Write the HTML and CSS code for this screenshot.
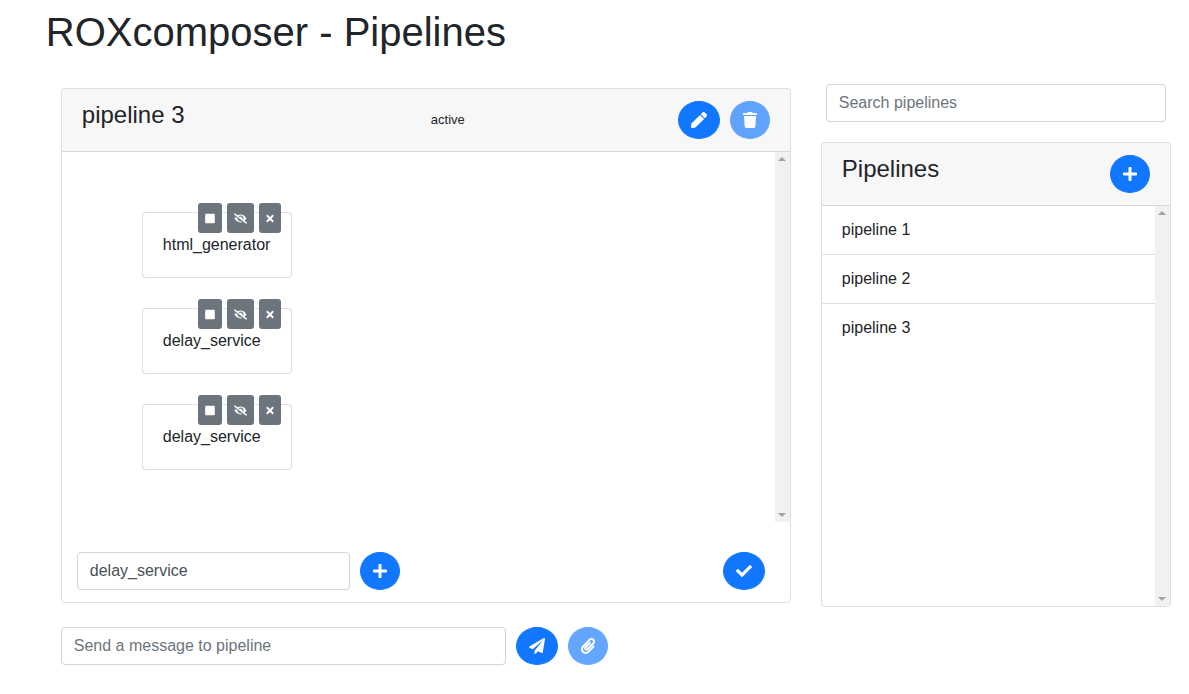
FILE: index.html
```html
<!DOCTYPE html>
<html lang="en">
<head>
<meta charset="utf-8">
<title>ROXcomposer - Pipelines</title>
<link rel="stylesheet" href="styles.css">
</head>
<body>
<svg class="defs" width="0" height="0" aria-hidden="true">
  <symbol id="i-pencil" viewBox="0 0 512 512"><path d="M290.74 93.24l128.02 128.02-277.99 277.99-114.14 12.6C11.35 513.54-1.56 500.62.14 485.34l12.7-114.22 277.9-278.88zm207.2-19.06l-60.11-60.11c-18.75-18.75-49.16-18.75-67.91 0l-56.55 56.55 128.02 128.02 56.55-56.55c18.75-18.76 18.75-49.16 0-67.91z"/></symbol>
  <symbol id="i-trash" viewBox="0 0 448 512"><path d="M432 32H312l-9.4-18.7A24 24 0 0 0 281.1 0H166.8a23.72 23.72 0 0 0-21.4 13.3L136 32H16A16 16 0 0 0 0 48v32a16 16 0 0 0 16 16h416a16 16 0 0 0 16-16V48a16 16 0 0 0-16-16zM53.2 467a48 48 0 0 0 47.9 45h245.8a48 48 0 0 0 47.9-45L416 128H32z"/></symbol>
  <symbol id="i-plus" viewBox="0 0 448 512"><path d="M416 208H272V64c0-17.67-14.33-32-32-32h-32c-17.67 0-32 14.33-32 32v144H32c-17.67 0-32 14.33-32 32v32c0 17.67 14.33 32 32 32h144v144c0 17.67 14.33 32 32 32h32c17.67 0 32-14.33 32-32V304h144c17.67 0 32-14.33 32-32v-32c0-17.67-14.33-32-32-32z"/></symbol>
  <symbol id="i-check" viewBox="0 0 512 512"><path d="M173.898 439.404l-166.4-166.4c-9.997-9.997-9.997-26.206 0-36.204l36.203-36.204c9.997-9.998 26.207-9.998 36.204 0L192 312.69 432.095 72.596c9.997-9.997 26.207-9.997 36.204 0l36.203 36.204c9.997 9.997 9.997 26.206 0 36.204l-294.4 294.401c-9.998 9.997-26.207 9.997-36.204-.001z"/></symbol>
  <symbol id="i-plane" viewBox="0 0 512 512"><path d="M476 3.2L12.5 270.6c-18.1 10.4-15.8 35.6 2.2 43.2L121 358.4l287.3-253.2c5.5-4.9 13.3 2.6 8.6 8.3L176 407v80.5c0 23.6 28.5 32.9 42.5 15.8L282 426l124.6 52.2c14.2 6 30.4-2.9 33-18.2l72-432C515 7.8 493.3-6.8 476 3.2z"/></symbol>
  <symbol id="i-clip" viewBox="0 0 448 512"><path d="M43.246 466.142c-58.43-60.289-57.341-157.511 1.386-217.581L254.392 34c44.316-45.332 116.351-45.336 160.671 0 43.89 44.894 43.943 117.329 0 162.276L232.214 383.128c-29.855 30.537-78.633 30.111-107.982-.998-28.275-29.97-27.368-77.473 1.452-106.953l143.743-146.835c6.182-6.314 16.312-6.422 22.626-.241l22.861 22.379c6.315 6.182 6.422 16.312.241 22.626L171.427 319.927c-4.932 5.045-5.236 13.428-.648 18.292 4.372 4.634 11.245 4.711 15.688.165l182.849-186.851c19.613-20.062 19.613-52.725-.011-72.798-19.189-19.627-49.957-19.637-69.154 0L90.39 293.295c-34.763 35.56-35.299 93.12-1.191 128.313 34.01 35.093 88.985 35.137 123.058.286l172.06-175.999c6.177-6.319 16.307-6.433 22.626-.256l22.877 22.364c6.319 6.177 6.434 16.307.256 22.626l-172.06 175.998c-59.576 60.938-155.943 60.216-214.77-.485z"/></symbol>
  <symbol id="i-stop" viewBox="0 0 448 512"><path d="M400 32H48C21.5 32 0 53.5 0 80v352c0 26.5 21.5 48 48 48h352c26.5 0 48-21.5 48-48V80c0-26.5-21.5-48-48-48z"/></symbol>
  <symbol id="i-times" viewBox="0 0 352 512"><path d="M242.72 256l100.07-100.07c12.28-12.28 12.28-32.19 0-44.48l-22.24-22.24c-12.28-12.28-32.19-12.28-44.48 0L176 189.28 75.93 89.21c-12.28-12.28-32.19-12.28-44.48 0L9.21 111.45c-12.28 12.28-12.28 32.19 0 44.48L109.28 256 9.21 356.07c-12.28 12.28-12.28 32.19 0 44.48l22.24 22.24c12.28 12.28 32.2 12.28 44.48 0L176 322.72l100.07 100.07c12.28 12.28 32.2 12.28 44.48 0l22.24-22.24c12.28-12.28 12.28-32.19 0-44.48L242.72 256z"/></symbol>
  <symbol id="i-eye" viewBox="0 0 640 512"><path d="M320 400c-75.85 0-137.25-58.71-142.9-133.11L72.2 185.82c-13.79 17.3-26.48 35.59-36.72 55.59a32.35 32.35 0 0 0 0 29.19C89.71 376.41 197.07 448 320 448c26.91 0 52.87-4 77.89-10.46L346 397.39a144.13 144.13 0 0 1-26 2.61zm313.82 58.1l-110.55-85.44a331.25 331.25 0 0 0 81.25-102.07 32.35 32.35 0 0 0 0-29.19C550.29 135.59 442.93 64 320 64a308.15 308.15 0 0 0-147.32 37.7L45.46 3.37A16 16 0 0 0 23 6.18L3.37 31.45A16 16 0 0 0 6.18 53.9l588.36 454.73a16 16 0 0 0 22.46-2.81l19.64-25.27a16 16 0 0 0-2.82-22.45zm-183.72-142l-39.3-30.38A94.75 94.75 0 0 0 416 256a94.76 94.76 0 0 0-121.31-92.21A47.65 47.65 0 0 1 304 192a46.64 46.64 0 0 1-1.54 10l-73.61-56.89A142.31 142.31 0 0 1 320 112a143.92 143.92 0 0 1 144 144c0 21.63-5.29 41.79-13.9 60.11z"/></symbol>
</svg>

<h1 class="page-title">ROXcomposer - Pipelines</h1>

<div class="layout">
  <main class="left">
    <section class="card pipeline-card">
      <header class="card-header pipeline-header">
        <h4 class="card-title pipeline-title">pipeline 3</h4>
        <span class="status">active</span>
        <div class="actions">
          <button class="btn"><svg class="ic w16"><use href="#i-pencil"/></svg></button>
          <button class="btn faded"><svg class="ic w14"><use href="#i-trash"/></svg></button>
        </div>
      </header>
      <div class="canvas-wrap">
        <div class="canvas">
          <div class="node">
            <div class="node-tools">
              <button class="tool"><svg class="ic t-stop"><use href="#i-stop"/></svg></button>
              <button class="tool"><svg class="ic t-eye"><use href="#i-eye"/></svg></button>
              <button class="tool"><svg class="ic t-times"><use href="#i-times"/></svg></button>
            </div>
            html_generator
          </div>
          <div class="node">
            <div class="node-tools">
              <button class="tool"><svg class="ic t-stop"><use href="#i-stop"/></svg></button>
              <button class="tool"><svg class="ic t-eye"><use href="#i-eye"/></svg></button>
              <button class="tool"><svg class="ic t-times"><use href="#i-times"/></svg></button>
            </div>
            delay_service
          </div>
          <div class="node">
            <div class="node-tools">
              <button class="tool"><svg class="ic t-stop"><use href="#i-stop"/></svg></button>
              <button class="tool"><svg class="ic t-eye"><use href="#i-eye"/></svg></button>
              <button class="tool"><svg class="ic t-times"><use href="#i-times"/></svg></button>
            </div>
            delay_service
          </div>
        </div>
        <div class="scrollbar"><span class="arrow up"></span><span class="arrow down"></span></div>
      </div>
      <div class="add-row">
        <input class="input add-input" type="text" value="delay_service">
        <button class="btn"><svg class="ic w14"><use href="#i-plus"/></svg></button>
        <button class="btn confirm"><svg class="ic w16"><use href="#i-check"/></svg></button>
      </div>
    </section>
    <div class="message-row">
      <input class="input message-input" type="text" placeholder="Send a message to pipeline">
      <button class="btn"><svg class="ic w16"><use href="#i-plane"/></svg></button>
      <button class="btn faded"><svg class="ic w14"><use href="#i-clip"/></svg></button>
    </div>
  </main>

  <aside class="right">
    <input class="input search" type="text" placeholder="Search pipelines">
    <section class="card list-card">
      <header class="card-header list-header">
        <h4 class="card-title">Pipelines</h4>
        <button class="btn"><svg class="ic w14"><use href="#i-plus"/></svg></button>
      </header>
      <div class="list-wrap">
        <ul class="list">
          <li class="list-item">pipeline 1</li>
          <li class="list-item">pipeline 2</li>
          <li class="list-item">pipeline 3</li>
        </ul>
        <div class="scrollbar"><span class="arrow up"></span><span class="arrow down"></span></div>
      </div>
    </section>
  </aside>
</div>
</body>
</html>
```

FILE: styles.css
```css
* { box-sizing: border-box; }

html, body { margin: 0; padding: 0; }

body {
  width: 1189px;
  height: 694px;
  overflow: hidden;
  background: #fff;
  color: #212529;
  font-family: "Liberation Sans", Arial, sans-serif;
  font-size: 16px;
  line-height: 1.5;
}

.defs { position: absolute; }

.page-title {
  margin: 0;
  padding: 8px 0 0 45.8px;
  height: 84px;
  font-size: 40px;
  font-weight: 400;
  line-height: 48px;
}

.layout { display: flex; align-items: flex-start; padding-left: 60.8px; }

.left { width: 730px; padding-top: 4px; }

.right { width: 350px; margin-left: 30px; }

.card {
  display: flex;
  flex-direction: column;
  background: #fff;
  border: 1px solid rgba(0, 0, 0, .125);
  border-radius: 4px;
  overflow: hidden;
}

.card-header {
  display: flex;
  height: 63px;
  flex: none;
  background: rgba(0, 0, 0, .03);
  border-bottom: 1px solid rgba(0, 0, 0, .125);
}

.card-title {
  margin: 0;
  font-size: 24px;
  font-weight: 400;
  line-height: 29px;
}

.pipeline-card { height: 515px; }

.pipeline-header { padding: 11px 20px 0; }

.pipeline-title { flex: 0 0 349px; }

.status { font-size: 13px; line-height: 20px; margin-top: 10px; color: #212529; }

.actions { display: flex; gap: 10px; margin: 1px 0 0 auto; }

.btn {
  display: inline-flex;
  align-items: center;
  justify-content: center;
  height: 38px;
  padding: 0 12px;
  background: #1177ff;
  border: 1px solid #1177ff;
  border-radius: 50%;
  color: #fff;
  flex: none;
}

.btn.faded { opacity: .65; }

.ic { display: block; fill: currentColor; height: 16px; flex: none; }
.w16 { width: 16px; }
.w14 { width: 14px; }

.canvas-wrap { display: flex; height: 370px; flex: none; }

.canvas { flex: 1; padding: 60px 0 0 80px; display: flex; flex-direction: column; gap: 30px; align-items: flex-start; }

.node {
  position: relative;
  width: 150px;
  height: 66px;
  padding: 20px 20px 0;
  line-height: 24px;
  white-space: nowrap;
  border: 1px solid rgba(0, 0, 0, .125);
  border-radius: 4px;
  background: #fff;
}

.node-tools {
  position: absolute;
  top: -10px;
  right: 10px;
  display: flex;
  gap: 5px;
}

.tool {
  display: flex;
  align-items: center;
  justify-content: center;
  height: 30px;
  padding: 0 7px;
  background: #6c757d;
  border: 0;
  border-radius: 3px;
  color: #fff;
}

.t-stop { width: 10px; height: 11px; }
.t-eye { width: 13px; height: 11px; }
.t-times { width: 8px; height: 11px; }

.scrollbar {
  position: relative;
  flex: 0 0 15px;
  width: 15px;
  background: #f1f1f1;
}

.arrow {
  position: absolute;
  left: 3.5px;
  width: 0;
  height: 0;
  border-left: 4px solid transparent;
  border-right: 4px solid transparent;
}

.arrow.up { top: 5px; border-bottom: 4px solid #a3a3a3; }
.arrow.down { bottom: 5px; border-top: 4px solid #a3a3a3; }

.add-row { display: flex; align-items: flex-start; gap: 10px; padding: 30px 25px 0 15px; }

.input {
  display: block;
  height: 38px;
  padding: 6px 12px;
  color: #495057;
  background: #fff;
  border: 1px solid #ced4da;
  border-radius: 4px;
  font-family: inherit;
  font-size: 16px;
  line-height: 24px;
}

.input::placeholder { color: #6c757d; opacity: 1; }

.add-input { width: 273px; }

.confirm { margin-left: auto; }

.message-row { display: flex; gap: 10px; margin-top: 24px; }

.message-input { width: 445px; }

.search { width: 340px; margin-left: 5px; }

.list-card { height: 465px; margin-top: 20px; }

.list-header { justify-content: space-between; padding: 11px 20px 0; }

.list-header .btn { margin-top: 1px; }

.list-wrap { display: flex; flex: 1; min-height: 0; }

.list { flex: 1; margin: 0; padding: 0; list-style: none; }

.list-item {
  height: 49px;
  padding: 12px 20px;
  line-height: 24px;
  border-bottom: 1px solid rgba(0, 0, 0, .125);
}

.list-item:last-child { border-bottom: 0; }
```
